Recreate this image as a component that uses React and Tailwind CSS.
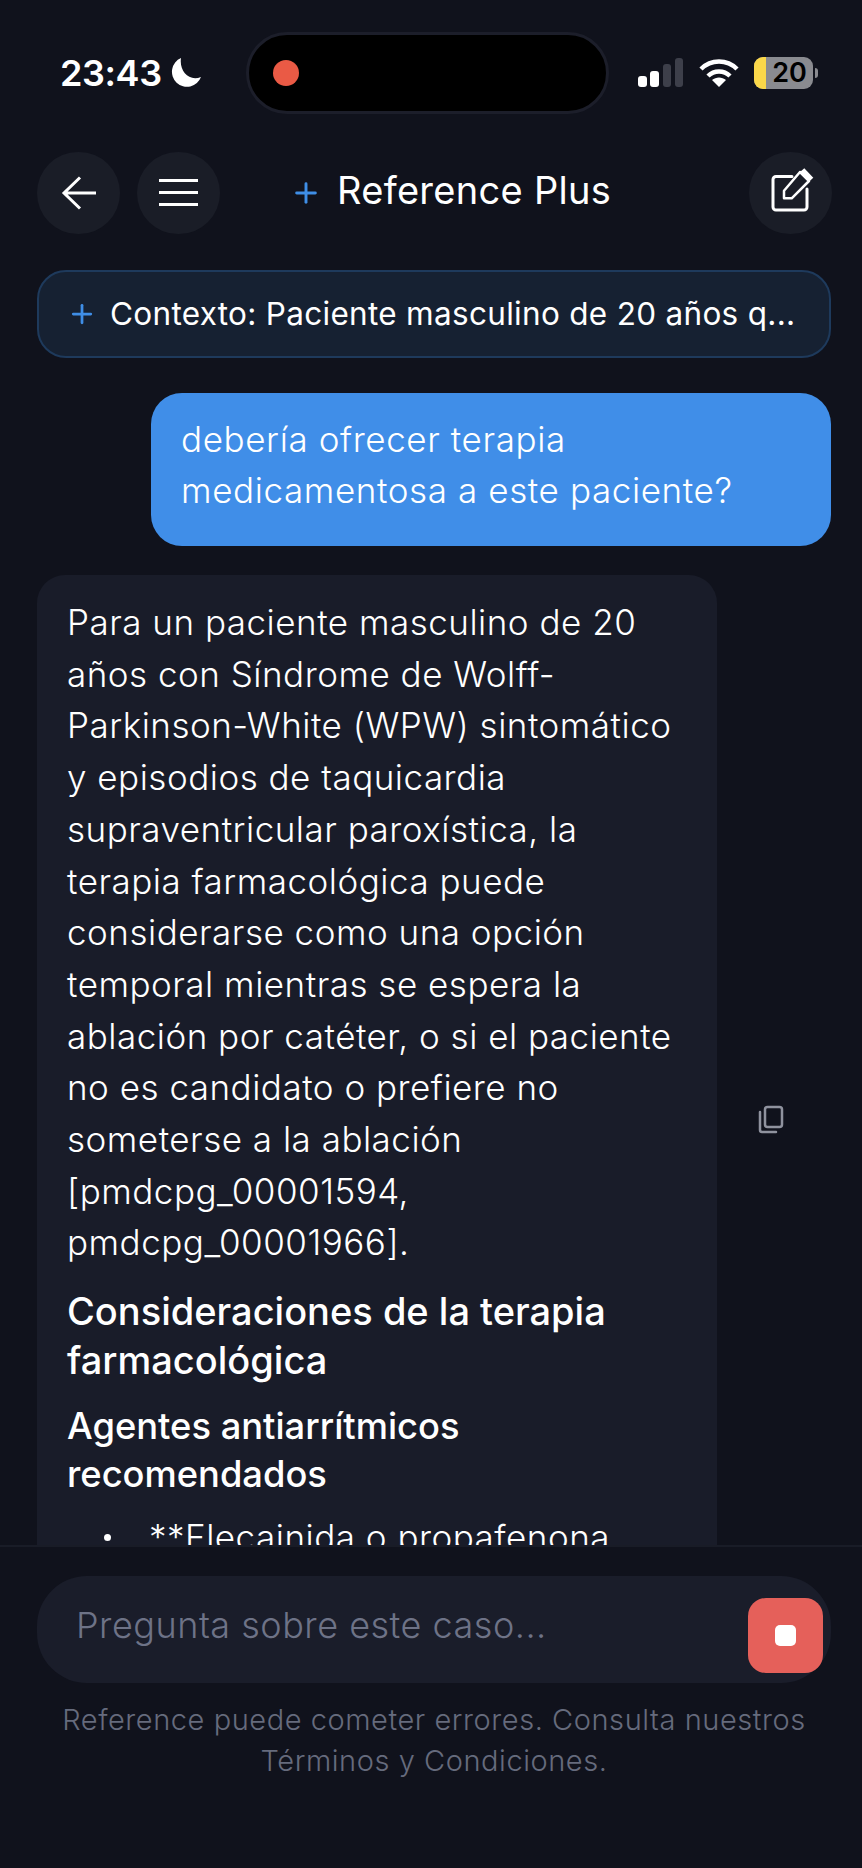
import React from "react";
import { Plus } from "lucide-react";

const paragraph = [
  "Para un paciente masculino de 20",
  "años con Síndrome de Wolff-",
  "Parkinson-White (WPW) sintomático",
  "y episodios de taquicardia",
  "supraventricular paroxística, la",
  "terapia farmacológica puede",
  "considerarse como una opción",
  "temporal mientras se espera la",
  "ablación por catéter, o si el paciente",
  "no es candidato o prefiere no",
  "someterse a la ablación",
  "[pmdcpg_00001594,",
  "pmdcpg_00001966].",
];

function Lines({ lines }) {
  return lines.map((line) => (
    <span key={line} className="block whitespace-nowrap">
      {line}
    </span>
  ));
}

function RoundButton({ children }) {
  return (
    <button className="flex h-[82px] w-[83px] items-center justify-center rounded-full bg-[#1a1d27] text-white">
      {children}
    </button>
  );
}

function StatusBar() {
  return (
    <div className="flex h-[146px] shrink-0 items-start pl-[60px] pr-[44px] pt-[32px]">
      <div className="flex h-[82px] w-[186px] items-center gap-[9px] text-[36px] font-semibold tracking-[-0.4px] text-white">
        <span>23:43</span>
        <svg width="30" height="30" viewBox="0 0 30 30" fill="white">
          <path d="M10 0A15 15 0 1 0 30 19C18 24 8 13 10 0Z" />
        </svg>
      </div>
      <div className="flex h-[82px] w-[363px] items-center rounded-full border-[3px] border-[#1c1e2a] bg-black pl-[24px]">
        <span className="h-[26px] w-[26px] rounded-full bg-[#ea5a45]" />
      </div>
      <div className="ml-auto flex h-[82px] items-center">
        <svg width="46" height="30" viewBox="0 0 46 30" className="mr-[15px]">
          <rect x="0" y="18" width="9" height="11" rx="3" fill="white" />
          <rect x="12" y="13" width="9" height="16" rx="3" fill="white" />
          <rect x="25" y="6" width="8" height="23" rx="3" fill="#3d3f4a" />
          <rect x="37" y="0" width="8" height="29" rx="3" fill="#3d3f4a" />
        </svg>
        <svg width="40" height="30" viewBox="0 0 40 30" className="mr-[15px]">
          <path d="M2 11 C12 1 28 1 38 11" fill="none" stroke="white" strokeWidth="4.500" />
          <path d="M9 18 C15 12 25 12 31 18" fill="none" stroke="white" strokeWidth="4.500" />
          <path d="M20 29 L13 22 C17 18.500 23 18.500 27 22 Z" fill="white" />
        </svg>
        <div className="flex h-[32px] w-[59px] rounded-[9px] bg-[#8a8b90] text-[27px] font-semibold leading-[32px] text-black">
          <span className="h-full w-[12px] shrink-0 rounded-l-[9px] bg-[#fbd84a]" />
          <span className="flex-1 text-center">20</span>
        </div>
        <span className="ml-[2px] h-[10px] w-[3px] rounded-r-full bg-[#8a8b90]" />
      </div>
    </div>
  );
}

function Header() {
  return (
    <div className="flex h-[93px] shrink-0 items-center pl-[37px] pr-[30px]">
      <div className="flex gap-[17px]">
        <RoundButton>
          <svg width="36" height="34" viewBox="0 0 36 34" fill="none" stroke="white" strokeWidth="3">
            <path d="M35 17H3M19 1.500 3 17l16 15.500" />
          </svg>
        </RoundButton>
        <RoundButton>
          <svg width="39" height="27" viewBox="0 0 39 27" fill="white">
            <rect y="0" width="39" height="3" />
            <rect y="12" width="39" height="3" />
            <rect y="24" width="39" height="3" />
          </svg>
        </RoundButton>
      </div>
      <div className="ml-[70px] flex items-center gap-[15px] text-[38px] leading-none tracking-[0.3px] text-white">
        <Plus size={32} strokeWidth={2.2} className="text-[#3f8ee6]" />
        <span className="mb-[5px]">Reference Plus</span>
      </div>
      <div className="ml-auto">
        <RoundButton>
          <svg width="46" height="46" viewBox="0 0 46 46" fill="none" stroke="white" strokeWidth="3" strokeLinejoin="round" className="mb-[3px] ml-[5px]">
            <path d="M22 8.500H6a3 3 0 0 0-3 3V39a3 3 0 0 0 3 3H34a3 3 0 0 0 3-3V21" strokeLinecap="round" />
            <path d="M14 22.700V30.300H21.700L39 13 30 4Z" strokeWidth="2.500" />
            <path d="M30 4 34.300.3 43.300 9.700 39 13.700Z" fill="white" stroke="none" />
          </svg>
        </RoundButton>
      </div>
    </div>
  );
}

function Thread() {
  return (
    <div className="min-h-0 flex-1 overflow-hidden pl-[37px] pr-[31px] pt-[31px]">
      <div className="flex h-[88px] items-center gap-[13px] rounded-[29px] border-2 border-[#1e3a5c] bg-[#162132] pl-[28px] text-[31.500px] tracking-[0.3px] text-white">
        <Plus size={30} strokeWidth={2.2} className="text-[#3f8ee6]" />
        <span className="whitespace-nowrap">Contexto: Paciente masculino de 20 años q...</span>
      </div>
      <div className="mt-[35px] flex justify-end">
        <div className="h-[153px] w-[680px] rounded-[31px] bg-[#408ee8] px-[30px] pt-[21px] text-[35px] font-[350] leading-[51px] tracking-[0.6px] text-white">
          <Lines lines={["debería ofrecer terapia", "medicamentosa a este paciente?"]} />
        </div>
      </div>
      <div className="mt-[29px] flex items-center">
        <div className="w-[680px] shrink-0 rounded-[28px] bg-[#191c29] px-[30px] pt-[22px] text-[35px] font-[350] leading-[51.700px] tracking-[0.5px] text-white">
          <p>
            <Lines lines={paragraph} />
          </p>
          <h3 className="mt-[18px] text-[38px] font-medium leading-[49px] tracking-normal">
            <Lines lines={["Consideraciones de la terapia", "farmacológica"]} />
          </h3>
          <h4 className="mt-[17px] text-[36.300px] font-medium leading-[48px] tracking-normal">
            <Lines lines={["Agentes antiarrítmicos", "recomendados"]} />
          </h4>
          <ul className="mt-[14px] pb-[60px]">
            <li className="flex items-center pl-[37px]">
              <span className="mr-[38px] h-[7px] w-[7px] shrink-0 rounded-full bg-white" />
              **Flecainida o propafenona
            </li>
          </ul>
        </div>
        <svg width="26" height="30" viewBox="0 0 26 30" fill="none" stroke="#8f929e" strokeWidth="2.500" className="mb-[56px] ml-[41px] mt-[530px] self-start">
          <rect x="7" y="2" width="17" height="20" rx="2.500" />
          <path d="M2 7 V25 a2 2 0 0 0 2 2 H18" strokeLinecap="round" />
        </svg>
      </div>
    </div>
  );
}

function Footer() {
  return (
    <div className="h-[323px] shrink-0 border-t-2 border-[#191c27] bg-[#10121c] pl-[37px] pr-[31px] pt-[29px]">
      <div className="flex h-[107px] rounded-[50px] bg-[#1a1d2a] pl-[39px] pr-[8px] pt-[22px]">
        <span className="mt-[7px] text-[36px] font-[350] leading-[40px] tracking-[0.5px] text-[#6e7387]">Pregunta sobre este caso...</span>
        <button className="ml-auto flex h-[75px] w-[75px] items-center justify-center rounded-[18px] bg-[#e5605a]">
          <span className="h-[21px] w-[21px] rounded-[5px] bg-white" />
        </button>
      </div>
      <p className="mt-[16px] whitespace-nowrap text-center text-[29px] font-[350] leading-[41px] tracking-[0.55px] text-[#666b7d]">
        Reference puede cometer errores. Consulta nuestros
        <br />
        Términos y Condiciones.
      </p>
    </div>
  );
}

export default function App() {
  return (
    <div className="flex h-[1868px] w-[862px] flex-col overflow-hidden bg-[#10121c] font-['Inter',sans-serif]">
      <StatusBar />
      <Header />
      <Thread />
      <Footer />
    </div>
  );
}
